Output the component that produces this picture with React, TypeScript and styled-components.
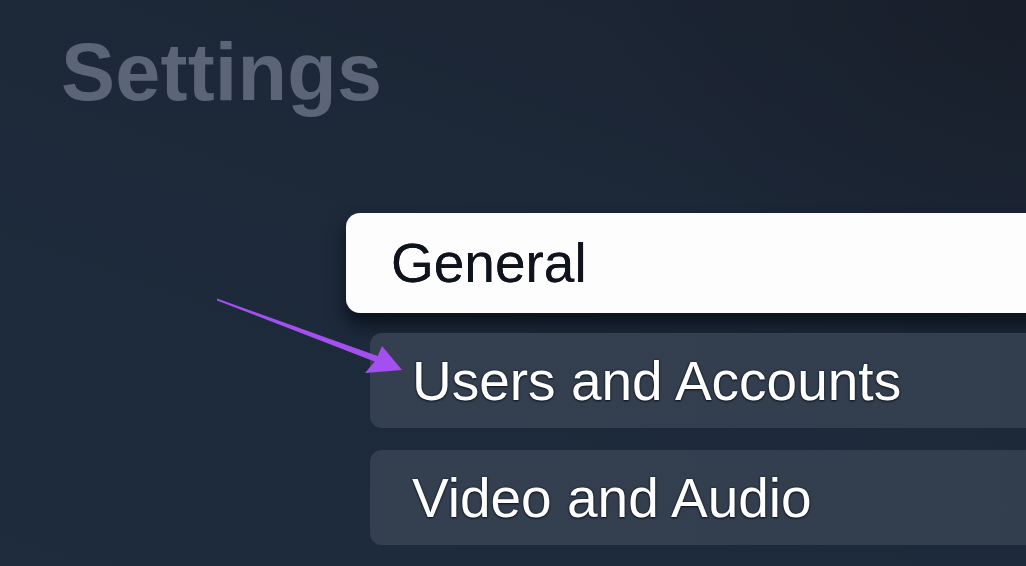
import React from "react";
import styled, { createGlobalStyle } from "styled-components";

const Global = createGlobalStyle`
  html, body {
    margin: 0;
    padding: 0;
    width: 1026px;
    height: 566px;
    overflow: hidden;
    background: #1d2a3b;
  }
  #root { height: 100%; }
`;

const Screen = styled.div`
  position: relative;
  width: 1026px;
  height: 566px;
  overflow: hidden;
  display: flex;
  flex-direction: column;
  font-family: "Liberation Sans", Arial, sans-serif;
  background:
    radial-gradient(ellipse 420px 320px at 1026px 0px, rgba(22, 27, 37, 0.6) 0%, rgba(22, 27, 37, 0) 100%),
    linear-gradient(200deg, #1b2331 0%, #1d2939 45%, #1e2c3e 100%);
`;

const Title = styled.h1`
  margin: 32px 0 0 61px;
  font-size: 81px;
  line-height: 80px;
  font-weight: 700;
  color: #5b6577;
  letter-spacing: 0.2px;
`;

const Menu = styled.div`
  margin-top: 101px;
  display: flex;
  flex-direction: column;
  gap: 20px;
`;

const Item = styled.div<{ $focused?: boolean; $extra?: number }>`
  display: flex;
  align-items: center;
  box-sizing: border-box;
  margin-left: ${(p) => (p.$focused ? 346 : 370)}px;
  margin-right: -40px;
  margin-top: ${(p) => p.$extra ?? 0}px;
  height: ${(p) => (p.$focused ? 100 : 95)}px;
  padding-left: ${(p) => (p.$focused ? 45 : 42)}px;
  border-radius: ${(p) => (p.$focused ? 14 : 12)}px;
  background: ${(p) =>
    p.$focused ? "#fdfdfd" : "linear-gradient(90deg, #343f50 0%, #323d4d 100%)"};
  box-shadow: ${(p) =>
    p.$focused ? "0 12px 18px rgba(6, 11, 20, 0.75)" : "none"};
  font-size: 55px;
  font-weight: 400;
  color: ${(p) => (p.$focused ? "#0e131d" : "#ffffff")};
  text-shadow: ${(p) =>
    p.$focused ? "0 0 0.6px #0e131d" : "0 0 2px rgba(10, 14, 22, 0.9), 0 1px 2px rgba(10, 14, 22, 0.8)"};
  white-space: nowrap;
`;

const Annotation = styled.svg`
  position: absolute;
  left: 0;
  top: 0;
  width: 1026px;
  height: 566px;
  pointer-events: none;
`;

export default function App() {
  return (
    <>
      <Global />
      <Screen>
        <Title>Settings</Title>
        <Menu>
          <Item $focused>General</Item>
          <Item>Users and Accounts</Item>
          <Item $extra={2}>Video and Audio</Item>
        </Menu>
        <Annotation viewBox="0 0 1026 566">
          <polygon
            points="217,298.5 379,356.5 377,362.5 217,300.5"
            fill="#a44ff0"
          />
          <polygon points="402,370 382,346 376,360 365,373" fill="#a44ff0" />
        </Annotation>
      </Screen>
    </>
  );
}
